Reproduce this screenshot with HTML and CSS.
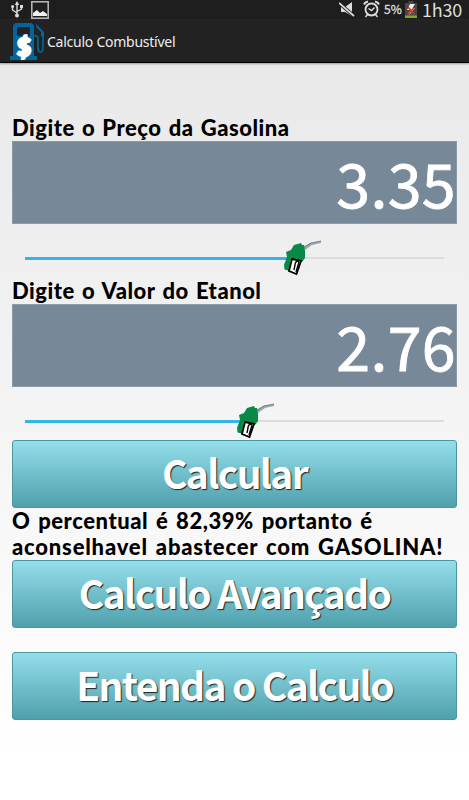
FILE: index.html
```
<!DOCTYPE html>
<html lang="pt-BR">
<head>
    <meta charset="UTF-8">
    <meta name="viewport" content="width=device-width, initial-scale=1.0">
    <title>Calculo Combustível</title>
    <link rel="stylesheet" href="styles.css">
</head>
<body>
    <svg class="defs" width="0" height="0">
        <symbol id="nozzle" viewBox="0 0 40 38">
            <path d="M20 8 L27 4 L38 2 L38 4 L29 6 L22 11 Z" fill="#9aa9ad"/>
            <path d="M20 9 L28 4 L38 2" fill="none" stroke="#63757b" stroke-width=".8"/>
            <path d="M11 6 L18 4 L19 6 L21 6 L22 12 L22 19 L19 23 L8 20 L6 29 L2 31 L1 26 L4 18 L3 13 L8 11 Z" fill="#078a45"/>
            <path d="M2 24 L7 21 L6 32 L1.5 30 Z" fill="#078a45"/>
            <path d="M9 20 L18 22 L13.5 35 L6 32 Z" fill="#fff" stroke="#000" stroke-width="1.8"/>
            <path d="M16 22 Q12 22 12 26 L11 31 M16 23 L13 33" fill="none" stroke="#000" stroke-width="1.4"/>
        </symbol>
    </svg>

    <div class="statusbar">
        <svg class="usb" width="12" height="17" viewBox="0 0 12 17" fill="none" stroke="#ddd" stroke-width="1.4">
            <path d="M6 3 V14 M6 12 L1.5 9 V5 M6 10.5 L10.5 8 V5"/>
            <path d="M3.8 4 L6 0 L8.2 4 Z" fill="#ddd" stroke="none"/>
            <circle cx="6" cy="14.5" r="2" fill="#ddd" stroke="none"/>
            <circle cx="1.6" cy="5.5" r="1.5" fill="#ddd" stroke="none"/>
            <path d="M9 4 H12 V7 H9 Z" fill="#ddd" stroke="none"/>
        </svg>
        <svg class="picture" width="18" height="18" viewBox="0 0 18 18">
            <rect x=".8" y=".8" width="16.4" height="16.4" fill="none" stroke="#bbb" stroke-width="1.5"/>
            <path d="M2 15 V12 L6 9 L9 12 L12 10 L16 13 V15 Z" fill="#eee"/>
        </svg>
        <svg class="mute" width="17" height="16" viewBox="0 0 17 16">
            <path d="M2 5 H6 L13 0 V14 L6 10 H2 Z" fill="#ddd"/>
            <path d="M0 1 L15 14" stroke="#202020" stroke-width="3.5"/>
            <path d="M0 1 L15 14" stroke="#ddd" stroke-width="1.7"/>
        </svg>
        <svg class="alarm" width="17" height="18" viewBox="0 0 17 18" fill="none" stroke="#ddd">
            <circle cx="8.5" cy="9.5" r="6" stroke-width="1.8"/>
            <path d="M5.5 8.5 L8.5 10.5 L11.5 7.5 M4.5 14.5 L2.5 17 M12.5 14.5 L14.5 17" stroke-width="1.5"/>
            <path d="M1 4.5 Q2 2 5 1.5 M12 1.5 Q15 2 16 4.5" stroke-width="2.2"/>
        </svg>
        <span class="percent">5%</span>
        <svg class="battery" width="12" height="17" viewBox="0 0 12 17">
            <path d="M3.5 0 H8.5 V2 H12 V17 H0 V2 H3.5 Z" fill="#484848"/>
            <path d="M0 14.5 H12 V17 H0 Z" fill="#7ea927"/>
            <path d="M5 3 H10 L7.5 7 H10 L4 14 L5.5 9 H2 Z" fill="#eee"/>
            <path d="M3 6 L9 13 M9 7 L3 13" stroke="#d83a20" stroke-width="1.7"/>
        </svg>
        <span class="clock">1h30</span>
    </div>

    <div class="actionbar">
        <svg class="logo" width="34" height="39" viewBox="0 0 34 39">
            <path d="M3 34 V5 Q3 1 7 1 H20 Q24 1 24 5 V34 H27 V38 H0 V34 Z" fill="#04659d"/>
            <rect x="7" y="5" width="13" height="9" rx="1" fill="#222"/>
            <path d="M24 14 Q28 13 28 17 V27 Q28 30 30.5 30 Q33 30 33 26 V12" fill="none" stroke="#04659d" stroke-width="1.6"/>
            <path d="M26 2 L34 10 V16 L31 14 V10 L26 5 Z" fill="#04659d"/>
            <text class="dollar" x="14" y="34" text-anchor="middle">$</text>
        </svg>
        <h1 class="title">Calculo Combustível</h1>
    </div>

    <div class="content">
        <label class="label">Digite o Preço da Gasolina</label>
        <div class="value">3.35</div>
        <div class="slider">
            <div class="track"><div class="fill" style="width: 64.4%"></div></div>
            <svg class="thumb gasolina" width="40" height="38"><use href="#nozzle"/></svg>
        </div>

        <label class="label">Digite o Valor do Etanol</label>
        <div class="value">2.76</div>
        <div class="slider">
            <div class="track"><div class="fill" style="width: 53%"></div></div>
            <svg class="thumb etanol" width="40" height="38"><use href="#nozzle"/></svg>
        </div>

        <button class="btn calcular">Calcular</button>
        <p class="result"><span class="line1">O percentual é 82,39% portanto é</span><br><span class="line2">aconselhavel abastecer com GASOLINA!</span></p>
        <button class="btn avancado">Calculo Avançado</button>
        <button class="btn entenda">Entenda o Calculo</button>
    </div>
</body>
</html>
```

FILE: styles.css
```
* {
    box-sizing: border-box;
}

body {
    margin: 0;
    height: 800px;
    overflow: hidden;
    display: flex;
    flex-direction: column;
    background: linear-gradient(#e9e9e9 62px, #fff 760px);
    font-family: "Noto Sans CJK SC", "Noto Sans", sans-serif;
}

.defs {
    position: absolute;
}

.statusbar {
    display: flex;
    flex: none;
    height: 20px;
    padding: 0 6px 0 11px;
    background: #1e1e1e;
    color: #ddd;
}

.usb { margin-top: 1px; }

.picture {
    margin: 1px auto 0 8px;
}

.mute { margin: 2px 7px 0 0; }

.alarm { margin-right: 4px; }

.percent {
    width: 18px;
    font-size: 12px;
    line-height: 17px;
    -webkit-text-stroke: .3px #ddd;
}

.battery {
    margin: 1px 5px 0 3px;
}

.clock {
    width: 41px;
    font-size: 18px;
    line-height: 18px;
    letter-spacing: -.2px;
}

.actionbar {
    display: flex;
    flex: none;
    align-items: center;
    height: 43px;
    padding: 0 10px;
    background: #222;
    border-bottom: 1px solid #000;
    box-shadow: 0 1px 2px #999;
    color: #eee;
}

.dollar {
    font: 900 24px "Lato", sans-serif;
    fill: #fff;
    stroke: #fff;
    stroke-width: 2.5px;
}

.title {
    margin: 0 0 0 3px;
    font-family: "Noto Sans", sans-serif;
    font-size: 14px;
    font-weight: 400;
    letter-spacing: -.25px;
}

.content {
    display: flex;
    flex-direction: column;
    padding: 52px 12px 0;
}

.label {
    height: 26px;
    font: 900 22px/26px "Lato", sans-serif;
    letter-spacing: .5px;
    word-spacing: 1.5px;
    white-space: nowrap;
    color: #000;
}

.value {
    height: 83px;
    border: 1px solid #8b9aa7;
    background: #778898;
    color: #fff;
    font-size: 61px;
    line-height: 79px;
    text-align: right;
    letter-spacing: .3px;
    -webkit-text-stroke: .8px #fff;
}

.slider {
    position: relative;
    height: 53.5px;
    padding: 33px 13px 0;
}

.track {
    height: 2px;
    background: #dcdcdc;
}

.fill {
    height: 3px;
    background: #33b5e5;
}

.thumb {
    position: absolute;
    top: 15px;
}

.gasolina { left: 271px; }

.etanol { left: 224px; }

.btn {
    flex: none;
    height: 68px;
    padding: 0 0 3px;
    border: 1px solid #4a97a3;
    border-radius: 3px;
    background: linear-gradient(#94deeb, #50a0ac);
    color: #fff;
    font: 700 39px/63px "Noto Sans CJK SC", "Noto Sans", sans-serif;
    letter-spacing: -1.7px;
    text-shadow: 1px 1px 1px #222;
}

.result {
    height: 52px;
    margin: 0;
    font: 900 22px/26px "Lato", sans-serif;
    white-space: nowrap;
    color: #000;
}

.line1 {
    letter-spacing: .55px;
    word-spacing: 2px;
}

.line2 {
    letter-spacing: .8px;
    word-spacing: 2px;
}

.entenda {
    margin-top: 24px;
}
```
